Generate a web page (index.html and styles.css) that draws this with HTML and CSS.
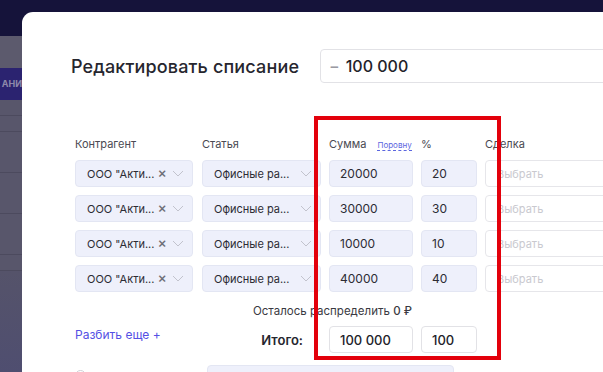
FILE: index.html
```html
<!DOCTYPE html>
<html lang="ru">

<head>
    <meta charset="UTF-8">
    <meta name="viewport" content="width=device-width, initial-scale=1.0">
    <title>Редактировать списание</title>
    <link rel="stylesheet" href="styles.css">
</head>

<body>
    <aside class="page-side">
        <div class="side-band side-top"></div>
        <div class="side-band side-grey"></div>
        <div class="side-band side-tab">АНИ</div>
        <div class="side-band side-row"></div>
        <div class="side-band side-row"></div>
        <div class="side-band side-row tall"></div>
        <div class="side-band side-row tall"></div>
        <div class="side-band side-row tall"></div>
        <div class="side-band side-row"></div>
        <div class="side-band side-bottom"></div>
    </aside>

    <div class="modal">
        <div class="modal-head">
            <h1>Редактировать списание</h1>
            <div class="amount-box"><span class="minus">&minus;</span> 100 000</div>
        </div>

        <div class="split-grid">
            <div class="col-label">Контрагент</div>
            <div class="col-label">Статья</div>
            <div class="col-label">Сумма <a class="equal-link" href="#">Поровну</a></div>
            <div class="col-label">%</div>
            <div class="col-label">Сделка</div>

            <div class="select filled"><span class="sel-text">ООО "Акти...</span><span class="clear">&times;</span><svg class="chev" viewBox="0 0 12 7"><path d="M1 1l5 5 5-5"/></svg></div>
            <div class="select filled"><span class="sel-text">Офисные ра...</span><svg class="chev" viewBox="0 0 12 7"><path d="M1 1l5 5 5-5"/></svg></div>
            <div class="field filled">20000</div>
            <div class="field filled">20</div>
            <div class="select empty"><span class="sel-text">Выбрать</span><svg class="chev" viewBox="0 0 12 7"><path d="M1 1l5 5 5-5"/></svg></div>

            <div class="select filled"><span class="sel-text">ООО "Акти...</span><span class="clear">&times;</span><svg class="chev" viewBox="0 0 12 7"><path d="M1 1l5 5 5-5"/></svg></div>
            <div class="select filled"><span class="sel-text">Офисные ра...</span><svg class="chev" viewBox="0 0 12 7"><path d="M1 1l5 5 5-5"/></svg></div>
            <div class="field filled">30000</div>
            <div class="field filled">30</div>
            <div class="select empty"><span class="sel-text">Выбрать</span><svg class="chev" viewBox="0 0 12 7"><path d="M1 1l5 5 5-5"/></svg></div>

            <div class="select filled"><span class="sel-text">ООО "Акти...</span><span class="clear">&times;</span><svg class="chev" viewBox="0 0 12 7"><path d="M1 1l5 5 5-5"/></svg></div>
            <div class="select filled"><span class="sel-text">Офисные ра...</span><svg class="chev" viewBox="0 0 12 7"><path d="M1 1l5 5 5-5"/></svg></div>
            <div class="field filled">10000</div>
            <div class="field filled">10</div>
            <div class="select empty"><span class="sel-text">Выбрать</span><svg class="chev" viewBox="0 0 12 7"><path d="M1 1l5 5 5-5"/></svg></div>

            <div class="select filled"><span class="sel-text">ООО "Акти...</span><span class="clear">&times;</span><svg class="chev" viewBox="0 0 12 7"><path d="M1 1l5 5 5-5"/></svg></div>
            <div class="select filled"><span class="sel-text">Офисные ра...</span><svg class="chev" viewBox="0 0 12 7"><path d="M1 1l5 5 5-5"/></svg></div>
            <div class="field filled">40000</div>
            <div class="field filled">40</div>
            <div class="select empty"><span class="sel-text">Выбрать</span><svg class="chev" viewBox="0 0 12 7"><path d="M1 1l5 5 5-5"/></svg></div>
        </div>

        <p class="remain">Осталось распределить <b>0 ₽</b></p>

        <div class="total-grid">
            <a class="split-more" href="#">Разбить еще +</a>
            <div class="total-label">Итого:</div>
            <div class="field total">100 000</div>
            <div class="field total">100</div>
        </div>

        <div class="next-row">
            <span class="radio"></span>
            <div class="next-box"></div>
        </div>

        <div class="highlight"></div>
    </div>
</body>

</html>
```

FILE: styles.css
```css
body {
    font-family: Inter, "Noto Sans", Arial, sans-serif;
    background-color: #15133a;
    margin: 0;
    padding: 0;
    height: 372px;
    overflow: hidden;
    display: flex;
    color: #2b2b33;
}

.page-side {
    width: 22px;
    flex-shrink: 0;
    display: flex;
    flex-direction: column;
    background-color: #58566b;
}

.side-band {
    border-bottom: 1px solid #4c4a5e;
}

.side-top {
    height: 36px;
    background-color: #15133a;
    border: none;
}

.side-grey {
    height: 32px;
    background-color: #5c5a6d;
    border: none;
}

.side-tab {
    height: 32px;
    background-color: #2b2370;
    color: #8d89aa;
    font-size: 9px;
    font-weight: 700;
    line-height: 32px;
    white-space: nowrap;
    text-align: right;
    border: none;
}

.side-row {
    height: 15px;
    background-color: #58566b;
}

.side-row.tall {
    height: 40px;
}

.side-bottom {
    flex: 1;
    background: linear-gradient(#55536a, #4f4e70);
    border: none;
}

.modal {
    position: relative;
    flex: 1;
    margin-top: 12px;
    background-color: #fff;
    border-top-left-radius: 11px;
    padding: 37px 0 0 53px;
    overflow: hidden;
}

.modal-head {
    display: flex;
    align-items: center;
    margin-left: -4px;
}

.modal-head h1 {
    margin: 0;
    width: 249px;
    font-size: 18px;
    font-weight: 500;
    letter-spacing: 0.15px;
    color: #26262e;
}

.amount-box {
    flex: 1;
    height: 32px;
    margin-right: -20px;
    border: 1px solid #e2e2e6;
    border-radius: 4px;
    padding-left: 8px;
    display: flex;
    align-items: center;
    font-size: 16px;
    font-weight: 500;
    color: #22222a;
}

.minus {
    color: #9a9aa2;
    margin-right: 6px;
}

.split-grid,
.total-grid {
    display: grid;
    grid-template-columns: 119px 119px 84px 56px 140px;
    column-gap: 8px;
}

.split-grid {
    margin-top: 54px;
    row-gap: 8px;
}

.split-grid > div:nth-child(5n+1),
.total-grid > :nth-child(1) {
    width: 118px;
}

.col-label {
    font-size: 11px;
    color: #4a4a52;
    height: 16px;
    margin-bottom: -1px;
}

.equal-link {
    font-size: 8px;
    color: #5b66e0;
    text-decoration: none;
    border-bottom: 1px dashed #5b66e0;
    margin-left: 8px;
}

.select,
.field {
    height: 27px;
    box-sizing: border-box;
    border-radius: 4px;
    font-size: 12px;
    display: flex;
    align-items: center;
}

.filled {
    background-color: #eef0fb;
    border: 1px solid #e3e6f3;
    color: #2c2c34;
}

.select {
    padding: 0 8px 0 11px;
}

.sel-text {
    flex: none;
    white-space: nowrap;
    font-size: 11px;
}

.clear {
    color: #6f6f78;
    font-size: 14px;
    font-weight: 500;
    margin: -2px 0 0 3px;
}

.chev {
    width: 12px;
    height: 7px;
    margin-left: auto;
    fill: none;
    stroke: #c2c3cd;
    stroke-width: 1;
}

.empty {
    background-color: #fff;
    border: 1px solid #e6e6ea;
}

.empty .sel-text {
    color: #c9c9cf;
}

.field {
    padding-left: 10px;
}

.remain {
    margin: 12px 0 0 178px;
    font-size: 11.5px;
    color: #3a3a42;
}

.remain b {
    font-weight: 500;
}

.total-grid {
    margin-top: 8px;
}

.split-more {
    font-size: 12px;
    color: #5450e4;
    text-decoration: none;
    margin-top: 1px;
}

.total-label {
    text-align: right;
    padding-right: 18px;
    font-size: 13px;
    font-weight: 600;
    color: #26262e;
    align-self: center;
}

.field.total {
    background-color: #fff;
    border: 1px solid #e2e2e6;
    color: #22222a;
    font-size: 13px;
    font-weight: 500;
}

.next-row {
    display: flex;
    align-items: flex-start;
    margin-top: 12px;
}

.radio {
    width: 9px;
    height: 9px;
    border: 1px solid #cfcfd6;
    border-radius: 50%;
    margin-top: 5px;
}

.next-box {
    width: 245px;
    height: 30px;
    margin-left: 121px;
    background-color: #eef0fb;
    border: 1px solid #e3e6f3;
    border-radius: 4px;
}

.highlight {
    position: absolute;
    left: 292px;
    top: 104px;
    width: 179px;
    height: 236px;
    border: 4px solid #e3000b;
}
```
